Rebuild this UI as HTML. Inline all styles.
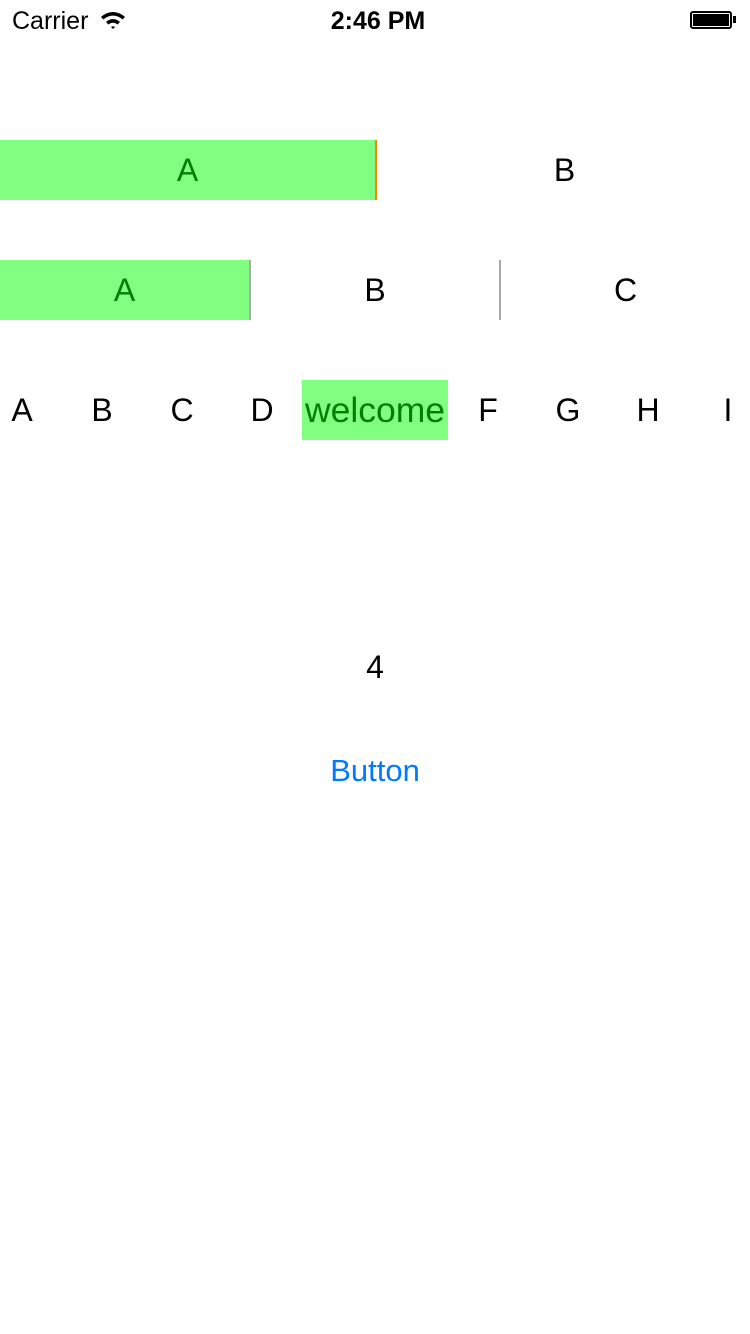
<!DOCTYPE html>
<html><head><meta charset="utf-8"><style>
body{margin:0;width:750px;height:1334px;background:#fff;position:relative;font-family:"Liberation Sans",sans-serif;overflow:hidden}
.a{position:absolute;display:flex;align-items:center;justify-content:center}
.t{font-size:32px;color:#000}
.g{background:#80ff80;color:#008000}
</style></head><body>
<div class="a" style="left:12px;top:6px;font-size:25px;height:30px">Carrier</div>
<svg style="position:absolute;left:100px;top:10px" width="26" height="20" viewBox="0 0 26 20"><path d="M1 7 A17 17 0 0 1 25 7 L22.5 9.5 A13.5 13.5 0 0 0 3.5 9.5Z M6 12 A10 10 0 0 1 20 12 L17.5 14.5 A6.5 6.5 0 0 0 8.5 14.5Z M11 17 A3 3 0 0 1 15 17 L13 19Z" fill="#000"/></svg>
<div class="a" style="left:3px;width:750px;top:6px;height:30px;font-size:25px;font-weight:bold">2:46 PM</div>
<div style="position:absolute;left:690px;top:11px;width:42px;height:18px;border:2px solid #000;border-radius:3px;box-sizing:border-box;padding:1px"><div style="background:#000;width:100%;height:100%"></div></div>
<div style="position:absolute;left:733px;top:16px;width:3px;height:7px;background:#000"></div>

<div class="a t g" style="left:0;top:140px;width:375px;height:60px">A</div>
<div style="position:absolute;left:375px;top:140px;width:2px;height:60px;background:#ff8000"></div>
<div class="a t" style="left:377px;top:140px;width:375px;height:60px">B</div>

<div class="a t g" style="left:0;top:260px;width:249px;height:60px">A</div>
<div style="position:absolute;left:249px;top:260px;width:2px;height:60px;background:#aaa"></div>
<div class="a t" style="left:251px;top:260px;width:248px;height:60px">B</div>
<div style="position:absolute;left:499px;top:260px;width:2px;height:60px;background:#aaa"></div>
<div class="a t" style="left:501px;top:260px;width:249px;height:60px">C</div>

<div class="a t" style="left:-18px;top:380px;width:80px;height:60px">A</div>
<div class="a t" style="left:62px;top:380px;width:80px;height:60px">B</div>
<div class="a t" style="left:142px;top:380px;width:80px;height:60px">C</div>
<div class="a t" style="left:222px;top:380px;width:80px;height:60px">D</div>
<div class="a t g" style="left:302px;top:380px;width:146px;height:60px;font-size:35.5px">welcome</div>
<div class="a t" style="left:448px;top:380px;width:80px;height:60px">F</div>
<div class="a t" style="left:528px;top:380px;width:80px;height:60px">G</div>
<div class="a t" style="left:608px;top:380px;width:80px;height:60px">H</div>
<div class="a t" style="left:688px;top:380px;width:80px;height:60px">I</div>

<div class="a" style="left:0;width:750px;top:647px;height:40px;font-size:32px">4</div>
<div class="a" style="left:0;width:750px;top:752px;height:38px;font-size:31px;color:#007aff">Button</div>
</body></html>
